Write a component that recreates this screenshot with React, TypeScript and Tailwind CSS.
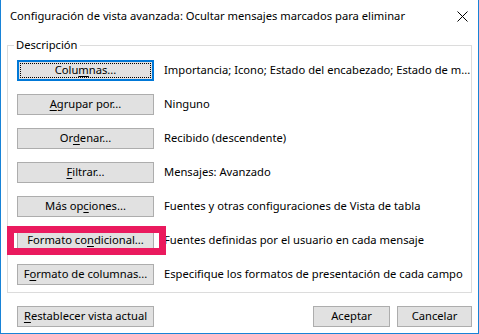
import React from 'react';

// a row in the description box: button + summary text
type Row = {
    label: React.ReactNode;
    text: string;
    focused?: boolean;
    marked?: boolean;
};

const rows: Row[] = [
    { label: <>Colu<u>m</u>nas...</>, text: 'Importancia; Icono; Estado del encabezado; Estado de m...', focused: true },
    { label: <><u>A</u>grupar por...</>, text: 'Ninguno' },
    { label: <>Or<u>d</u>enar...</>, text: 'Recibido (descendente)' },
    { label: <><u>F</u>iltrar...</>, text: 'Mensajes: Avanzado' },
    { label: <>Más op<u>c</u>iones...</>, text: 'Fuentes y otras configuraciones de Vista de tabla' },
    { label: <>Formato co<u>n</u>dicional...</>, text: 'Fuentes definidas por el usuario en cada mensaje', marked: true },
    { label: <>F<u>o</u>rmato de columnas...</>, text: 'Especifique los formatos de presentación de cada campo' },
];

const font = { fontFamily: '"Segoe UI", "Noto Sans", sans-serif' };

const DialogButton = ({ children, focused, className = '' }: { children: React.ReactNode; focused?: boolean; className?: string }) => {
    return (
        <button
            className={`h-[21px] shrink-0 flex items-center justify-center bg-[#e1e1e1] text-black text-[11.2px] leading-none underline-offset-[2px] ${focused
                ? 'border-2 border-[#0078d7] outline outline-1 outline-dotted outline-black outline-offset-[-4px]'
                : 'border border-[#adadad]'} ${className}`}
        >
            <span className="-mt-[1px]">{children}</span>
        </button>
    );
};

export default function App() {
    return (
        <div className="w-[479px] h-[334px] bg-white border-x border-b border-[#1883d7] text-black flex flex-col" style={font}>
            {/* title bar */}
            <div className="h-[32px] flex items-center pl-[9px] pr-[10px] text-[11.2px]">
                <span className="flex-1">Configuración de vista avanzada: Ocultar mensajes marcados para eliminar</span>
                <svg width="11" height="11" viewBox="0 0 11 11">
                    <path d="M0.5 0.5 L10.5 10.5 M10.5 0.5 L0.5 10.5" stroke="#000" strokeWidth="1" />
                </svg>
            </div>

            {/* description group */}
            <fieldset className="min-w-0 mx-[6px] mt-[5px] border border-[#dcdcdc] pl-[9px] pr-2 pb-[7px]">
                <legend className="ml-[-3px] px-[2px] text-[11.2px] leading-[16px]">Descripción</legend>
                <div className="flex flex-col gap-[13px] pt-[7px]">
                    {rows.map((r, i) => (
                        <div key={i} className="relative flex items-center gap-[10px]">
                            <DialogButton focused={r.focused} className="w-[137px]">{r.label}</DialogButton>
                            <span className="text-[11.2px] whitespace-nowrap">{r.text}</span>
                            {r.marked && (
                                <div className="absolute left-[-10px] top-[-4px] w-[159px] h-[29px] border-[7px] border-[#ea1a5e]" />
                            )}
                        </div>
                    ))}
                </div>
            </fieldset>

            {/* bottom buttons */}
            <div className="flex items-center mt-[13px] pl-[16px] pr-[6px]">
                <DialogButton className="w-[137px]"><u>R</u>establecer vista actual</DialogButton>
                <div className="flex-1" />
                <DialogButton className="w-[77px]">Aceptar</DialogButton>
                <DialogButton className="w-[75px] ml-[7px]">Cancelar</DialogButton>
            </div>
        </div>
    );
}
